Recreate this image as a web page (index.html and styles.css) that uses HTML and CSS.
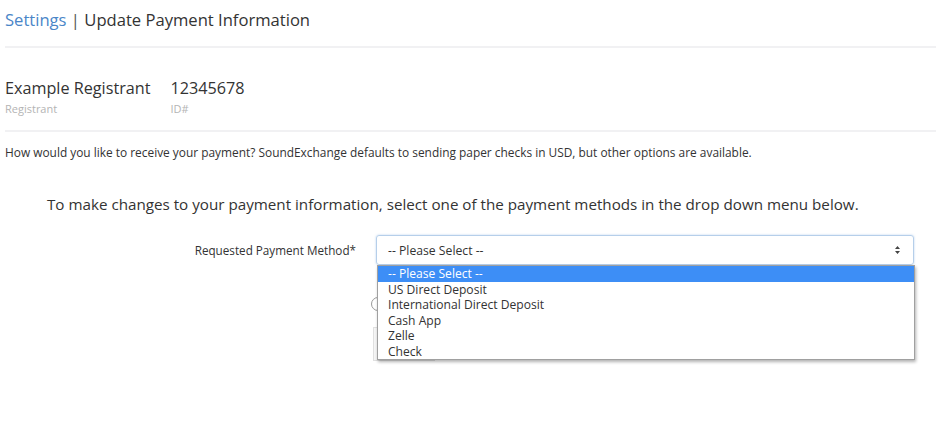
FILE: index.html
```html
<!DOCTYPE html>
<html>
<head>
<meta charset="utf-8">
<link rel="stylesheet" href="styles.css">
</head>
<body>
<div class="page">
  <header class="title">
    <a class="crumb">Settings</a><span class="sep"> | </span><span>Update Payment Information</span>
  </header>
  <section class="registrant">
    <div class="field">
      <div class="value">Example Registrant</div>
      <div class="caption">Registrant</div>
    </div>
    <div class="field">
      <div class="value">12345678</div>
      <div class="caption">ID#</div>
    </div>
  </section>
  <p class="intro">How would you like to receive your payment? SoundExchange defaults to sending paper checks in USD, but other options are available.</p>
  <p class="lead">To make changes to your payment information, select one of the payment methods in the drop down menu below.</p>
  <div class="form-row">
    <label class="label">Requested Payment Method*</label>
    <div class="control">
      <div class="select">
        <span>-- Please Select --</span>
        <svg class="arrows" width="7" height="10" viewBox="0 0 7 10"><path d="M3.5 1 L6 4 H1 Z M3.5 9 L6 6 H1 Z" fill="#444"/></svg>
      </div>
      <div class="behind">
        <span class="radio"></span>
        <span class="btn"></span>
      </div>
      <ul class="menu">
        <li class="active">-- Please Select --</li>
        <li>US Direct Deposit</li>
        <li>International Direct Deposit</li>
        <li>Cash App</li>
        <li>Zelle</li>
        <li>Check</li>
      </ul>
    </div>
  </div>
</div>
</body>
</html>
```
FILE: styles.css
```css
html, body {
  margin: 0;
  padding: 0;
  background: #fff;
}
body {
  font-family: "Open Sans", Lato, sans-serif;
  color: #333;
}
.page {
  padding: 0 0 0 5px;
}
.title {
  font-size: 16.6px;
  height: 46px;
  line-height: 40px;
  border-bottom: 2px solid #f1f1f3;
  color: #333;
}
.crumb {
  color: #4a86c8;
}
.sep {
  color: #555;
}
.registrant {
  display: flex;
  gap: 20px;
  padding-top: 31px;
  height: 51px;
  border-bottom: 2px solid #f1f1f3;
}
.field .value {
  font-size: 16.2px;
  line-height: 18px;
  color: #333;
}
.field .caption {
  font-size: 11px;
  color: #b4b4b4;
  margin-top: 4px;
}
.intro {
  font-size: 11.9px;
  margin: 13px 0 0;
  line-height: 14px;
}
.lead {
  font-size: 15.2px;
  margin: 35px 0 0 42px;
  line-height: 20px;
}
.form-row {
  display: flex;
  margin-top: 21px;
}
.label {
  width: 351px;
  text-align: right;
  font-size: 11.7px;
  padding-top: 7px;
  color: #333;
}
.control {
  margin-left: 20px;
  position: relative;
  width: 538px;
}
.select {
  height: 28px;
  border: 1px solid #b6cfea;
  border-radius: 3px;
  box-shadow: 0 0 2px rgba(102,155,220,0.5);
  display: flex;
  align-items: center;
  justify-content: space-between;
  padding: 0 12px 0 11px;
  font-size: 12.2px;
  color: #333;
}
.behind {
  position: relative;
  height: 100px;
}
.radio {
  position: absolute;
  left: -5px;
  top: 32px;
  width: 12px;
  height: 12px;
  border: 1px solid #999;
  border-radius: 50%;
}
.btn {
  position: absolute;
  left: -3px;
  top: 62px;
  width: 60px;
  height: 32px;
  border: 1px solid #e0e0e0;
  background: #f5f5f5;
}
.menu {
  position: absolute;
  left: 1px;
  top: 30px;
  width: 536px;
  margin: 0;
  padding: 0;
  list-style: none;
  background: #fff;
  border: 1px solid #a0a0a0;
  box-shadow: 1px 2px 3px rgba(0,0,0,0.3);
  font-size: 12.1px;
}
.menu li {
  height: 15.5px;
  line-height: 15px;
  padding-left: 10px;
  color: #333;
}
.menu li.active {
  background: #3d8ef6;
  color: #fff;
}
```
